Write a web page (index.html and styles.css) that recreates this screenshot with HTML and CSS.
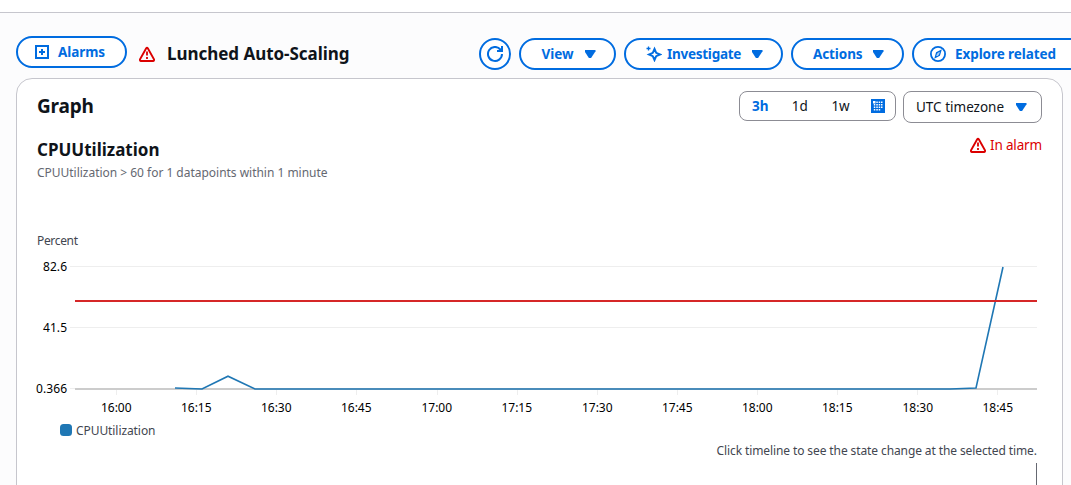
FILE: index.html
```html
<!DOCTYPE html>
<html lang="en">
<head>
<meta charset="utf-8">
<title>Alarm details</title>
<link rel="stylesheet" href="styles.css">
</head>
<body>
<div class="topbar"></div>
<header class="header">
  <button class="btn btn-alarms">
    <svg class="icon" viewBox="0 0 16 16"><path d="M2 2h12v12H2zM8 5v6M5 8h6"/></svg>
    <span class="t-alarms">Alarms</span>
  </button>
  <svg class="icon warn title-warn" viewBox="0 0 16 16"><path d="M7.2 2.2Q8 1 8.8 2.2L15 13.3Q15.4 14.8 14 15H2Q.6 14.8 1 13.3Z"/><path class="bang" d="M8 5.5v4M8 11v2"/></svg>
  <h1 class="title">Lunched Auto-Scaling</h1>
  <div class="actions">
    <button class="btn btn-refresh" aria-label="Refresh">
      <svg class="icon refresh" viewBox="0 0 16 16"><path d="M15 8a7 7 0 1 1-1.6-4.5L15 5M10 5h5V0"/></svg>
    </button>
    <button class="btn btn-view"><span class="t-view">View</span><i class="caret"></i></button>
    <button class="btn btn-investigate">
      <svg class="icon" viewBox="0 0 16 16"><path class="star" d="M8.5 3 10.2 6.8 14 8.5 10.2 10.2 8.5 14 6.8 10.2 3 8.5 6.8 6.8Z"/><path class="thin" d="M2.5 .5v4M.5 2.5h4"/></svg>
      <span class="t-investigate">Investigate</span><i class="caret"></i>
    </button>
    <button class="btn btn-actions"><span class="t-actions">Actions</span><i class="caret"></i></button>
    <button class="btn btn-explore">
      <svg class="icon" viewBox="0 0 16 16"><circle class="ring" cx="8" cy="8" r="7.1"/><path class="thin" d="M10.8 4.6 9.4 9.2 5.3 11.5 6.6 6.8ZM8 7.5v1"/></svg>
      <span class="t-explore">Explore related</span>
    </button>
  </div>
</header>
<main class="card">
  <div class="card-head">
    <h2 class="graph-title">Graph</h2>
    <div class="range">
      <span class="r3">3h</span><span class="r1d">1d</span><span class="r1w">1w</span>
      <svg class="cal" viewBox="0 0 14 14"><path class="cal-bg" d="M0 0h14v14H0z"/><path class="cal-in" d="M2 2h10v10H2z"/><path class="cal-dots" d="M2 2h2.500v2.500H2zM5.300 2.500h1.500v1.500H5.300zM7.700 2.500h1.500v1.500H7.700zM10 2.500h1.500v1.500H10zM2.800 5h1.500v1.500H2.800zM5.300 5h1.500v1.500H5.300zM7.700 5h1.500v1.500H7.700zM10 5h1.500v1.500H10zM2.800 7.500h1.500v1.500H2.800zM5.300 7.500h1.500v1.500H5.300zM7.700 7.500h1.500v1.500H7.700zM10 7.500h1.500v1.500H10zM2.800 10h1.500v1.500H2.800zM5.300 10h1.500v1.500H5.300zM7.700 10h1.500v1.500H7.700z"/></svg>
    </div>
    <div class="tz"><span class="t-tz">UTC timezone</span><i class="caret"></i></div>
  </div>
  <div class="metric-head">
    <div>
      <h3 class="metric">CPUUtilization</h3>
      <p class="condition">CPUUtilization &gt; 60 for 1 datapoints within 1 minute</p>
    </div>
    <div class="state">
      <svg class="icon warn" viewBox="0 0 16 16"><path d="M7.2 2.2Q8 1 8.8 2.2L15 13.3Q15.4 14.8 14 15H2Q.6 14.8 1 13.3Z"/><path class="bang" d="M8 5.5v4M8 11v2"/></svg>
      <span class="t-state">In alarm</span>
    </div>
  </div>
  <svg class="chart" viewBox="17 230 1045 255" width="1045" height="255">
    <text class="muted" x="37" y="245" textLength="41">Percent</text>
    <path class="grid" d="M70 266.5h967M70 327.5h967M70 388.5h5M116.5 390v5M196.5 390v5M276.5 390v5M356.5 390v5M437.5 390v5M517.5 390v5M597.5 390v5M677.5 390v5M757.5 390v5M837.5 390v5M917.5 390v5M997.5 390v5"/>
    <path class="axis" d="M75 389h962"/>
    <path class="series" d="M175 388 202 389 228 376.2 255 389H950L976 388 1003 267"/>
    <path class="threshold" d="M75 301h962"/>
    <g class="ticks">
      <text x="43" y="271" textLength="24">82.6</text>
      <text x="43" y="332" textLength="24">41.5</text>
      <text x="36" y="393" textLength="31">0.366</text>
      <text x="101" y="412" textLength="30.5">16:00</text>
      <text x="181" y="412" textLength="30.5">16:15</text>
      <text x="261" y="412" textLength="30.5">16:30</text>
      <text x="341" y="412" textLength="30.5">16:45</text>
      <text x="421.5" y="412" textLength="30.5">17:00</text>
      <text x="501.5" y="412" textLength="30.5">17:15</text>
      <text x="582" y="412" textLength="30.5">17:30</text>
      <text x="662" y="412" textLength="30.5">17:45</text>
      <text x="742" y="412" textLength="30.5">18:00</text>
      <text x="822" y="412" textLength="30.5">18:15</text>
      <text x="902.5" y="412" textLength="30.5">18:30</text>
      <text x="982.5" y="412" textLength="30.5">18:45</text>
    </g>
    <rect class="swatch" x="60" y="424" width="12" height="12" rx="3.5"/>
    <text class="muted" x="76" y="435" textLength="79.5">CPUUtilization</text>
    <text class="muted" x="716.5" y="455" textLength="320.5">Click timeline to see the state change at the selected time.</text>
    <path class="marker" d="M1036.5 463v22"/>
  </svg>
</main>
</body>
</html>
```
FILE: styles.css
```css
* { box-sizing: border-box; }
body {
  margin: 0;
  width: 1071px;
  height: 485px;
  overflow: hidden;
  background: #fcfcfd;
  color: #0f141a;
  font-family: "Noto Sans", "Open Sans", sans-serif;
  font-size: 14px;
}
h1, h2, h3, p { margin: 0; white-space: nowrap; }
.topbar { height: 13px; background: #fff; border-bottom: 1px solid #c6c6cd; }
.header { height: 65px; padding: 23px 0 0 16px; display: flex; align-items: flex-start; }
.btn {
  flex: none;
  height: 32px;
  padding: 0;
  display: flex;
  align-items: center;
  border: 2px solid #006ce0;
  border-radius: 16px;
  background: #fff;
  color: #006ce0;
  font: 700 13.5px/20px "Noto Sans", "Open Sans", sans-serif;
  white-space: nowrap;
}
.icon { flex: none; width: 16px; height: 16px; fill: none; stroke: currentColor; stroke-width: 2; }
.thin { stroke-width: 1.3; }
.star { stroke-width: 2; }
.ring { stroke-width: 1.8; }
.bang { stroke-width: 1.8; }
.warn { color: #db0000; stroke-width: 1.9; }
.btn-alarms { width: 111px; padding-left: 16px; gap: 8px; }
.t-alarms { width: 47px; letter-spacing: -0.1px; }
.title-warn { margin: 10px 0 0 12px; }
.title { flex: none; margin: 6px 0 0 12px; width: 189px; font-size: 17px; line-height: 24px; letter-spacing: -0.04px; }
.actions { display: flex; gap: 8px; margin: 2px 0 0 123px; }
.btn-refresh { width: 32px; justify-content: center; }
.btn-view { width: 97px; padding-left: 20px; }
.t-view { width: 33px; }
.btn-investigate { width: 159px; padding-left: 20px; }
.btn-investigate .icon { margin-right: 5px; }
.t-investigate { width: 74px; letter-spacing: -0.26px; }
.btn-actions { width: 113px; padding-left: 20px; }
.t-actions { width: 49px; letter-spacing: -0.1px; }
.btn-explore { width: 180px; padding-left: 16px; gap: 9px; }
.t-explore { letter-spacing: -0.08px; }
.caret { flex: none; width: 11px; height: 8px; margin-left: 10.5px; background: #006ce0; clip-path: polygon(0 0, 100% 0, 100% 15%, 60% 100%, 40% 100%, 0 15%); }
.card { width: 1047px; height: 420px; margin-left: 16px; border: 1px solid #c6c6cd; border-radius: 16px 16px 0 0; background: #fff; }
.card-head { height: 56px; padding: 12px 20px 0; display: flex; align-items: flex-start; }
.graph-title { flex: 1; font-size: 19px; line-height: 30px; letter-spacing: -0.2px; }
.range { width: 157px; height: 30px; margin-right: 7px; padding-left: 12px; display: flex; align-items: center; border: 1px solid #8c8c94; border-radius: 8px; font-size: 13.5px; }
.range span { width: 39.7px; margin-top: -1px; white-space: nowrap; }
.range .r3 { color: #006ce0; font-weight: 700; }
.cal { width: 14px; height: 14px; }
.cal-bg { fill: #006ce0; }
.cal-in { fill: #006ce0; }
.cal-dots { fill: #fff; }
.tz { width: 139px; height: 32px; padding-left: 12px; display: flex; align-items: center; border: 1px solid #8c8c94; border-radius: 8px; font-size: 13.5px; white-space: nowrap; }
.t-tz { width: 89px; margin-top: -1px; }
.metric-head { height: 95px; padding: 0 20px; display: flex; justify-content: space-between; }
.metric { padding-top: 3px; font-size: 17px; line-height: 24px; }
.condition { padding-top: 2px; color: #656871; font-size: 12px; line-height: 18px; letter-spacing: -0.02px; }
.state { height: 20px; display: flex; align-items: center; gap: 4px; color: #db0000; font-size: 13.5px; letter-spacing: -0.17px; white-space: nowrap; }
.t-state { width: 52px; }
.chart { display: block; font-size: 12px; }
.muted { fill: #424650; }
.ticks { fill: #000; }
.grid { fill: none; stroke: #eee; stroke-width: 1; }
.axis { stroke: #ccc; stroke-width: 2; }
.series { fill: none; stroke: #1f77b4; stroke-width: 1.6; }
.threshold { stroke: #d62728; stroke-width: 2; }
.swatch { fill: #1f77b4; }
.marker { stroke: #656871; stroke-width: 1; }
```
